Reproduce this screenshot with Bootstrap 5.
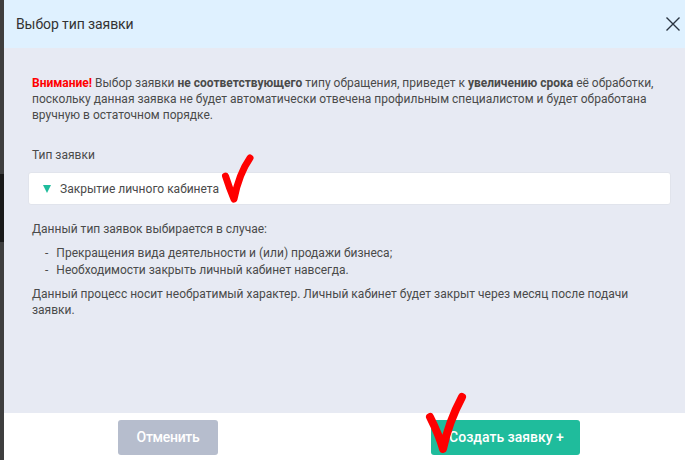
<!DOCTYPE html>
<html lang="ru">
<head>
  <meta charset="UTF-8">
  <meta name="viewport" content="width=device-width, initial-scale=1.0">
  <title>Выбор тип заявки</title>
  <link href="https://cdn.jsdelivr.net/npm/bootstrap@5.3.0/dist/css/bootstrap.min.css" rel="stylesheet">
  <style>
    html, body {
      height: 460px;
      overflow: hidden;
    }
    body {
      font-family: Roboto, "Liberation Sans", sans-serif;
      font-size: 12px;
      line-height: 16px;
      color: #4a4a4a;
    }
    /* затемнённая страница за окном */
    .page-strip {
      width: 4px;
      height: 460px;
      background-color: #3e3e3e;
    }
    .page-strip-dark {
      height: 68px;
      margin-top: 174px;
      background-color: #191919;
    }
    .dlg {
      width: 681px;
      height: 460px;
      background-color: #fff;
      position: relative;
    }
    .dlg-head {
      height: 48px;
      background-color: #dff1ff;
      padding-left: 12px;
      color: #333;
      font-size: 14px;
      letter-spacing: -0.1px;
    }
    .dlg-close {
      width: 24px;
      height: 48px;
      border: 0;
      background: none;
      padding: 0;
    }
    .dlg-body {
      height: 365px;
      background-color: #e7eaf3;
      padding: 27px 14px 0 28px;
    }
    .warn-label {
      color: #f00;
      font-weight: 700;
    }
    .type-label {
      margin: 24px 0 9px;
    }
    .type-box {
      height: 33px;
      margin-left: -4px;
      background-color: #fff;
      border: 1px solid #e1e4ec;
      border-radius: 3px;
      padding-left: 14px;
      gap: 9px;
    }
    .type-mark {
      width: 0;
      height: 0;
      border-left: 4.5px solid transparent;
      border-right: 4.5px solid transparent;
      border-top: 8px solid #1fbc9c;
    }
    .type-hint {
      margin: 16px 0 0;
    }
    .reason-list {
      list-style: none;
      margin: 8px 0 7px;
      padding: 0 0 0 13px;
    }
    .reason-list li {
      display: flex;
      gap: 8px;
      line-height: 17px;
    }
    .closing-note {
      margin: 0;
    }
    .warn-note {
      margin: 0;
    }
    .dlg-foot {
      height: 47px;
      padding-top: 7px;
    }
    .btn-cancel, .btn-create {
      height: 35px;
      padding: 0;
      border: 0;
      border-radius: 3px;
      color: #fff;
      font-size: 14px;
      font-weight: 500;
      line-height: 35px;
    }
    .btn-cancel {
      width: 100px;
      margin-left: 114px;
      background-color: #b6bdcd;
      letter-spacing: -0.3px;
    }
    .btn-create {
      width: 149px;
      margin-left: 213px;
      padding-left: 2px;
      background-color: #1fbc9c;
    }
    .tick {
      position: absolute;
      pointer-events: none;
    }
    .tick-one {
      left: 212px;
      top: 148px;
    }
    .tick-two {
      left: 420px;
      top: 390px;
    }
  </style>
</head>
<body>
  <div class="d-flex">
    <div class="page-strip">
      <div class="page-strip-dark"></div>
    </div>

    <div class="dlg">
      <!-- Шапка -->
      <div class="dlg-head d-flex align-items-center justify-content-between">
        <span>Выбор тип заявки</span>
        <button class="dlg-close d-flex align-items-center justify-content-center" type="button" aria-label="Закрыть">
          <svg width="16" height="16" viewBox="0 0 16 16"><path d="M1.5 1.5 L14.5 14.5 M14.5 1.5 L1.5 14.5" stroke="#2b3440" stroke-width="1.4" fill="none"/></svg>
        </button>
      </div>

      <!-- Содержимое -->
      <div class="dlg-body">
        <p class="warn-note"><span class="warn-label">Внимание!</span> Выбор заявки <b>не соответствующего</b> типу обращения, приведет к <b>увеличению срока</b> её обработки, поскольку данная заявка не будет автоматически отвечена профильным специалистом и будет обработана вручную в остаточном порядке.</p>
        <p class="type-label">Тип заявки</p>
        <div class="type-box d-flex align-items-center">
          <span class="type-mark"></span>
          <span>Закрытие личного кабинета</span>
        </div>
        <p class="type-hint">Данный тип заявок выбирается в случае:</p>
        <ul class="reason-list">
          <li><span>-</span><span>Прекращения вида деятельности и (или) продажи бизнеса;</span></li>
          <li><span>-</span><span>Необходимости закрыть личный кабинет навсегда.</span></li>
        </ul>
        <p class="closing-note">Данный процесс носит необратимый характер. Личный кабинет будет закрыт через месяц после подачи заявки.</p>
      </div>

      <!-- Кнопки -->
      <div class="dlg-foot d-flex">
        <button class="btn btn-cancel" type="button">Отменить</button>
        <button class="btn btn-create" type="button">Создать заявку +</button>
      </div>

      <!-- Красные пометки поверх -->
      <svg class="tick tick-one" width="40" height="60" viewBox="0 0 40 60"><path d="M9.5 28 C12 36 15 44 18 51 C21 36 27 20 34 10" stroke="#f00" stroke-width="7" stroke-linecap="round" stroke-linejoin="round" fill="none"/></svg>
      <svg class="tick tick-two" width="50" height="70" viewBox="0 0 50 70"><path d="M6 27 C11 37 16 48 19 59 C23 40 30 22 38 7" stroke="#f00" stroke-width="8" stroke-linecap="round" stroke-linejoin="round" fill="none"/></svg>
    </div>
  </div>

  <script src="https://cdn.jsdelivr.net/npm/bootstrap@5.3.0/dist/js/bootstrap.bundle.min.js"></script>
</body>
</html>
